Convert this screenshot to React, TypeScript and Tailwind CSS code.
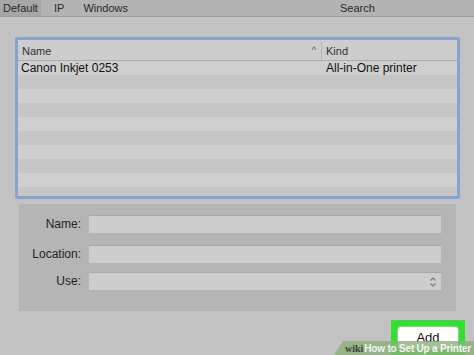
const rows = Array.from({ length: 10 });

const Field = ({ label, select }: { label: string; select?: boolean }) => (
  <div className="flex items-center h-[18px]">
    <div className="w-[62px] text-right text-[12px] text-[#1e1e1e]">{label}</div>
    <div className="ml-[8px] w-[352px] h-[18px] bg-[#cdcdcd] border-t border-[#a8a8a8] flex items-center justify-end pr-[4px]">
      {select && (
        <svg width="8" height="12" viewBox="0 0 8 12" className="text-[#7a7a7a]">
          <path d="M1.5 4.5 L4 2 L6.5 4.5 M1.5 7.5 L4 10 L6.5 7.5" fill="none" stroke="currentColor" strokeWidth="1.2" />
        </svg>
      )}
    </div>
  </div>
);

export default function App() {
  return (
    <div
      className="relative w-[474px] h-[355px] overflow-hidden bg-[#c2c2c2]"
      style={{ fontFamily: '"Liberation Sans", Arial, sans-serif' }}
    >
      {/* Tabs */}
      <div className="h-[17px] flex items-center bg-[#b3b3b3] border-b border-[#9c9c9c] text-[11px] text-[#2a2a2a]">
        <div className="h-full w-[41px] bg-[#a7a7a7] flex items-center justify-center">Default</div>
        <div className="ml-[13px]">IP</div>
        <div className="ml-[19px]">Windows</div>
        <div className="ml-[212px]">Search</div>
      </div>

      {/* Table */}
      <div className="mt-[20px] ml-[15px] w-[445px] h-[162px] border-[3px] border-[#85a3cc] rounded-[2px] overflow-hidden bg-[#cbcbcb]">
        <div className="h-[21px] flex items-center pt-[2px] text-[11px] text-[#333] bg-[#cdcdcd] border-b border-[#aeaeae]">
          <div className="flex-1 pl-[4px] flex items-center">
            <span>Name</span>
            <span className="ml-auto mr-[5px] text-[9px] text-[#555]">^</span>
          </div>
          <div className="w-[136px] h-full border-l border-[#b5b5b5] pl-[4px] flex items-center">Kind</div>
        </div>
        {rows.map((_, i) => (
          <div
            key={i}
            className={`h-[14px] flex items-center text-[12px] text-[#111] ${i % 2 === 0 ? 'bg-[#cfcfcf]' : 'bg-[#c6c6c6]'}`}
          >
            {i === 0 && (
              <>
                <div className="flex-1 pl-[3px]">Canon Inkjet 0253</div>
                <div className="w-[136px] pl-[5px]">All-in-One printer</div>
              </>
            )}
          </div>
        ))}
      </div>

      {/* Form */}
      <div className="mt-[5px] ml-[19px] w-[437px] h-[107px] bg-[#b5b5b5] pt-[11px] flex flex-col gap-[12px]">
        <Field label="Name:" />
        <Field label="Location:" />
        <div className="-mt-[3px]">
          <Field label="Use:" select />
        </div>
      </div>

      {/* Add button */}
      <div className="absolute left-[391px] top-[320px] w-[74px] h-[40px] bg-[#2fe22f] p-[6px]">
        <div className="h-[24px] bg-white rounded-[4px] border border-[#b0b0b0] flex items-center justify-center text-[13px] text-[#111]">
          Add
        </div>
      </div>

      {/* wikiHow watermark */}
      <div
        className="absolute left-[334px] top-[341px] w-[145px] h-[14px] bg-[#8ab27a]/80 flex items-center pl-[11px] text-[10px] font-bold whitespace-nowrap"
        style={{ clipPath: 'polygon(9px 0, 100% 0, 100% 100%, 0 100%)' }}
      >
        <span className="text-[#3d3d3d]" style={{ fontFamily: '"Liberation Serif", serif' }}>wiki</span>
        <span className="text-[#f4f4f4] ml-[1px] tracking-[-0.2px]">How to Set Up a Printer</span>
      </div>
    </div>
  );
}
